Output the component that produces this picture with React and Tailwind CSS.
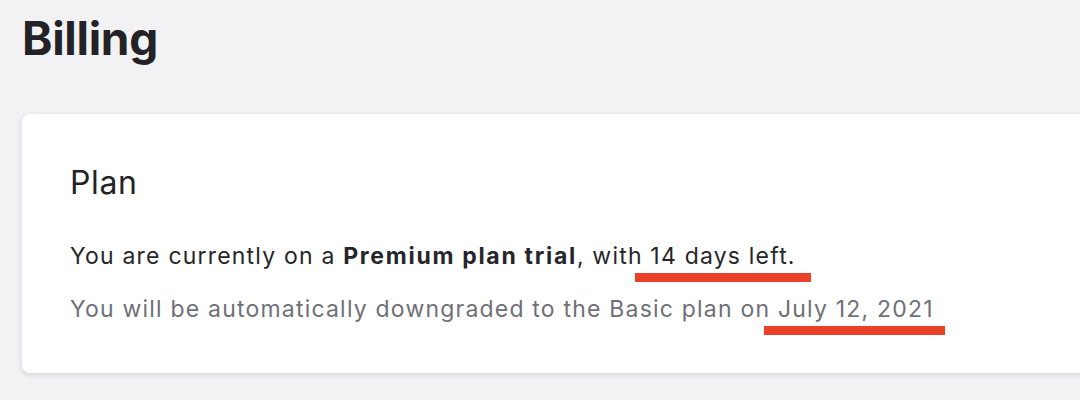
import React from 'react';

function Mark({ children, className }) {
  // red annotation stroke under the highlighted words
  return (
    <span className="relative">
      {children}
      <span className={'absolute top-[31px] h-[9px] bg-[#ea4228] ' + className} />
    </span>
  );
}

export default function App() {
  return (
    <div className="flex min-h-[400px] w-[1080px] flex-col gap-[48px] overflow-hidden bg-[#f2f2f4] pl-[22px] pt-[10px] font-['Inter',sans-serif] text-[#232327]">
      <h1 className="text-[46px] font-bold leading-[56px] tracking-[-0.3px]">Billing</h1>
      <section className="flex w-[1100px] shrink-0 flex-col rounded-lg bg-white pl-[48px] pt-[50px] pb-[49px] shadow-[0_2px_6px_rgba(0,0,0,0.12)]">
        <h2 className="text-[32px] font-normal leading-[38px] tracking-[0.6px]">Plan</h2>
        <div className="mt-[39px] flex flex-col gap-[23px] text-[23px] leading-[30px] tracking-[1.2px]">
          <p className="text-[#26262a]">
            You are currently on a <span className="font-bold tracking-[1.7px]">Premium plan trial</span>, with{' '}
            <Mark className="left-[-15px] right-[-15px]">14 days left.</Mark>
          </p>
          <p className="text-[#6f6f78]">
            You will be automatically downgraded to the Basic plan on{' '}
            <Mark className="left-[-14px] right-[-11px]">July 12, 2021</Mark>
          </p>
        </div>
      </section>
    </div>
  );
}
